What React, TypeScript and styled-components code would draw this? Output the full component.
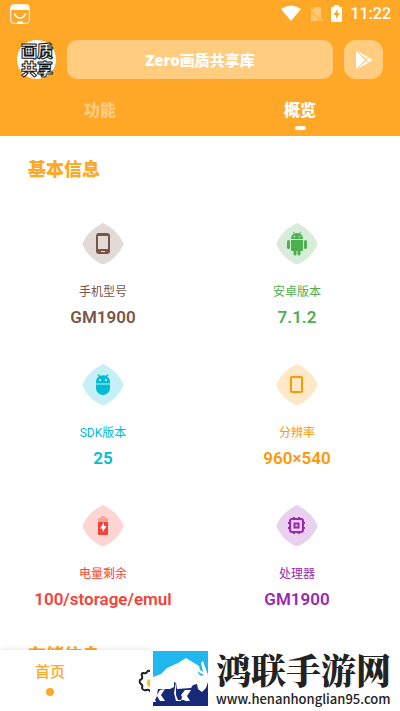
import React from "react";
import styled, { createGlobalStyle } from "styled-components";

const Global = createGlobalStyle`
  *, *::before, *::after { box-sizing: border-box; }
  body { margin: 0; background: #fff; font-family: Roboto, "Noto Sans CJK SC", sans-serif; }
  h1, h2, p, dl, dt, dd { margin: 0; }
  button { border: 0; padding: 0; background: none; font: inherit; color: inherit; }
`;

const Page = styled.div`
  position: relative;
  display: flex;
  flex-direction: column;
  height: 100vh;
  overflow: hidden;
  background: #fff;
`;

const Header = styled.header`
  flex: none;
  background: #ffa726;
  color: #fff;
`;

const StatusBar = styled.div`
  display: flex;
  align-items: center;
  height: 27px;
  padding: 0 9px 0 10px;
`;

const StatusIcons = styled.div`
  display: flex;
  align-items: center;
  gap: 8px;
  margin-left: auto;
`;

const Clock = styled.time`
  font-size: 16px;
  line-height: 20px;
  font-weight: 500;
`;

const TopRow = styled.div`
  display: flex;
  align-items: center;
  gap: 11px;
  padding: 13px 17px 0;
`;

const Avatar = styled.div`
  flex: none;
  display: flex;
  width: 39px;
  height: 39px;
  border-radius: 50%;
  background: #fff;
`;

const TitleButton = styled.button`
  flex: 1;
  height: 39px;
  border-radius: 10px;
  background: #ffcc80;
  font-size: 15px;
  font-weight: 900;
  font-family: "Noto Sans", "Noto Sans CJK SC", sans-serif;
`;

const StoreButton = styled.button`
  flex: none;
  display: flex;
  align-items: center;
  justify-content: center;
  width: 39px;
  height: 39px;
  border-radius: 12px;
  background: #ffcc80;
`;

const Tabs = styled.div`
  display: grid;
  grid-template-columns: 1fr 1fr;
  height: 57px;
`;

const Tab = styled.button<{ $active?: boolean }>`
  display: flex;
  flex-direction: column;
  align-items: center;
  gap: 3px;
  padding-top: 20px;
  color: ${(p) => (p.$active ? "#fff" : "#ffcc80")};
  font-size: 16px;
  line-height: 24px;
  font-weight: 900;
  &::after {
    content: "";
    width: 11px;
    height: 4px;
    border-radius: 2px;
    background: ${(p) => (p.$active ? "#fff" : "transparent")};
  }
`;

const Content = styled.main`
  flex: 1;
  min-height: 0;
  overflow: hidden;
`;

const SectionTitle = styled.h2`
  padding: 20px 28px 0;
  color: #ffa726;
  font-size: 18px;
  line-height: 28px;
  font-weight: 900;
`;

const InfoGrid = styled.dl`
  display: grid;
  grid-template-columns: 1fr 1fr;
  row-gap: 35px;
  padding: 39px 6px 11px;
`;

const InfoCard = styled.div<{ $color: string }>`
  display: flex;
  flex-direction: column;
  align-items: center;
  color: ${(p) => p.$color};
`;

const InfoLabel = styled.dt`
  margin-top: 18px;
  font-size: 12px;
  line-height: 18px;
`;

const InfoValue = styled.dd`
  margin-top: 4px;
  font-size: 17px;
  line-height: 24px;
  font-weight: 600;
`;

const BottomNav = styled.nav`
  flex: none;
  display: grid;
  grid-template-columns: 1fr 1fr 1fr 1fr;
  height: 61px;
  background: #fff;
  box-shadow: 0 0 6px rgba(0, 0, 0, 0.12);
  z-index: 1;
`;

const NavButton = styled.button`
  display: flex;
  flex-direction: column;
  align-items: center;
  justify-content: center;
  gap: 6px;
  color: #ffa726;
  font-size: 15px;
  line-height: 18px;
  font-weight: 500;
  &[aria-current] {
    justify-content: flex-start;
    gap: 7px;
    padding-top: 13px;
  }
  &[aria-current]::after {
    content: "";
    width: 8px;
    height: 8px;
    border-radius: 50%;
    background: currentColor;
  }
`;

const Watermark = styled.a`
  position: absolute;
  right: 0;
  bottom: 0;
  z-index: 2;
  display: flex;
  width: 250px;
  height: 65px;
  padding: 5px 0 0 3px;
  gap: 8px;
  background: #fff;
  color: #222;
  text-decoration: none;
`;

const Logo = styled.svg`
  flex: none;
  width: 55px;
  height: 55px;
`;

const WatermarkText = styled.div`
  display: flex;
  flex-direction: column;
  gap: 4px;
  white-space: nowrap;
`;

const WatermarkName = styled.strong`
  font-family: "Noto Serif CJK SC", "Noto Sans CJK SC", serif;
  font-size: 35px;
  line-height: 36px;
  font-weight: 900;
`;

const WatermarkUrl = styled.span`
  font-family: "Noto Sans CJK SC", sans-serif;
  font-size: 13px;
  line-height: 16px;
  font-weight: 500;
`;

const AvatarText = styled.text`
  font-family: "Noto Sans CJK SC", sans-serif;
  font-size: 16px;
  font-weight: 900;
  fill: #fff;
  stroke: #111;
  stroke-width: 1px;
  stroke-linejoin: round;
`;

function Badge({ color, children }: { color: string; children: React.ReactNode }) {
  return (
    <svg width="42" height="42" viewBox="0 0 42 42" aria-hidden="true" fill={color}>
      <path
        d="M21 0C22 .3 23 1 25 2.200C32 6 37.500 12 40.500 18.500Q42.500 21 40.500 23.500C37.500 30 32 36 25 39.800Q21 42.500 17 39.800C10 36 4.500 30 1.500 23.500Q-.5 21 1.500 18.500C4.500 12 10 6 17 2.200C19 1 20 .3 21 0Z"
        opacity=".22"
      />
      {children}
    </svg>
  );
}

const phone = (
  <path fillRule="evenodd" d="M17 10h8a3 3 0 0 1 3 3v15a3 3 0 0 1-3 3h-8a3 3 0 0 1-3-3V13a3 3 0 0 1 3-3Zm-1 3v13h10V13Zm3 15v1h4v-1Z" />
);

const android = (
  <g>
    <path d="M15 16c0-3 1.500-4.500 3-5.300l-1.200-1.600.6-.5 1.400 1.800a8 8 0 0 1 4.400 0l1.400-1.800.6.5-1.200 1.600c1.500.8 3 2.300 3 5.300Z" />
    <path d="M15 17h12v10a1 1 0 0 1-1 1h-1.500v3a1.500 1.500 0 0 1-3 0v-3h-1v3a1.500 1.500 0 0 1-3 0v-3H16a1 1 0 0 1-1-1Z" />
    <rect x="11" y="17" width="3" height="9" rx="1.500" />
    <rect x="28" y="17" width="3" height="9" rx="1.500" />
    <circle cx="18.500" cy="13.500" r=".7" fill="#fff" />
    <circle cx="23.500" cy="13.500" r=".7" fill="#fff" />
  </g>
);

const adb = (
  <g>
    <path d="M14 19v-1c0-3 1.500-4.800 3-5.800L15.300 11l.9-.8 2 1.600a8 8 0 0 1 5.600 0l2-1.600.9.800-1.700 1.200c1.500 1 3 2.800 3 5.800v1Z" />
    <path d="M14 21h14v3a7 7 0 0 1-14 0Z" />
    <path d="M14 19h14v2H14Z" opacity=".5" />
    <circle cx="18" cy="16" r="1" fill="#fff" />
    <circle cx="24" cy="16" r="1" fill="#fff" />
  </g>
);

const screen = (color: string) => (
  <rect x="15" y="13" width="11" height="15" rx="1" fill="none" stroke={color} strokeWidth="2" />
);

const battery = (
  <g>
    <path d="M16 17v-3q0-1 1-1h2v-2h4v2h2q1 0 1 1v3Z" opacity=".35" />
    <path d="M16 17h10v12q0 1-1 1h-8q-1 0-1-1Z" />
    <path d="m22 17-4 6.500h2.500v4l4-6.500H22Z" fill="#fff" />
  </g>
);

const chip = (color: string) => (
  <g fill="none" stroke={color} strokeWidth="2">
    <rect x="14" y="14" width="13" height="13" rx="2" />
    <rect x="18.500" y="18.500" width="4" height="4" />
    <path d="M18 12v2m5-2v2m-5 13v2m5-2v2M12 18h2m-2 5h2m13-5h2m-2 5h2" />
  </g>
);

const items = [
  { label: "手机型号", value: "GM1900", color: "#795548", icon: phone },
  { label: "安卓版本", value: "7.1.2", color: "#4caf50", icon: android },
  { label: "SDK版本", value: "25", color: "#00bcd4", icon: adb },
  { label: "分辨率", value: "960×540", color: "#ff9800", icon: screen("#ff9800") },
  { label: "电量剩余", value: "100/storage/emul", color: "#f44336", icon: battery },
  { label: "处理器", value: "GM1900", color: "#9c27b0", icon: chip("#9c27b0") },
];

function BisonLogo() {
  return (
    <Logo viewBox="0 0 55 55" aria-hidden="true">
      <path d="M0 0h55v55H0Z" fill="#20b7ee" />
      <path d="M0 26 8 23 14 17 25 12 33 7 41 12 46 15 47 19 50 21 49 16 48 12 50 10 52 16 55 24V55H0Z" fill="#fff" />
      <path d="M45 20q3 4 6 3l-2 2q-4-1-4-5Z" fill="#20b7ee" />
      <path d="M0 55V49L4 44 5 38H17L21 36 21 31 23 32 24 38 38 37 40 34 44 33 45 38 49 41 53 37 55 31V55Z" fill="#172a78" />
      <path d="m7 39 5-1-4 6 4 6H7l-3-5-2 4 1 2H0v-4l4-3ZM23 31v13l2 5h6l-3-5 4-5h6l-4 6 3 5h-5l-3-4-1 4h-5l-2-8Z" fill="#fff" />
    </Logo>
  );
}

export default function App() {
  return (
    <Page>
      <Global />
      <Header>
        <StatusBar>
          <svg width="20" height="20" viewBox="0 0 20 20" aria-hidden="true">
            <rect x=".7" y=".7" width="18.600" height="18.600" rx="3" fill="none" stroke="#fff" />
            <path d="M1 6V3q0-2 3-2h12q3 0 3 2v3Z" fill="#fff" />
            <path d="M4.500 9.500c2 6 9 6 11 0" fill="none" stroke="#fff" strokeWidth="1.500" />
            <path d="M7 18.500h6" stroke="#fff" strokeWidth="2" />
          </svg>
          <StatusIcons>
            <svg width="20" height="17" viewBox="0 0 20 17" aria-hidden="true">
              <path d="M0 4q10-7 20 0L10 16Z" fill="#fff" />
            </svg>
            <svg width="14" height="16" viewBox="0 0 14 16" aria-hidden="true">
              <path d="M6 1h6v14H2V5Z" fill="#ffc774" />
              <path d="m0 3 13 13" stroke="#ffa726" strokeWidth="1" />
              <path d="m0 1 14 14" stroke="#ffc774" />
            </svg>
            <svg width="11" height="17" viewBox="0 0 11 17" aria-hidden="true">
              <path d="M0 3q0-1 1-1h2V0h5v2h2q1 0 1 1v13q0 1-1 1H1q-1 0-1-1Z" fill="#fff" />
              <path d="M6.500 4 2.500 10H5v4l4-6H6.500Z" fill="#ffa726" />
            </svg>
            <Clock>11:22</Clock>
          </StatusIcons>
        </StatusBar>
        <TopRow>
          <Avatar>
            <svg width="39" height="39" viewBox="0 0 39 39" role="img" aria-label="画质共享">
              <AvatarText x="4" y="17">画质</AvatarText>
              <AvatarText x="4" y="35">共享</AvatarText>
            </svg>
          </Avatar>
          <TitleButton>Zero画质共享库</TitleButton>
          <StoreButton aria-label="应用商店">
            <svg width="18" height="20" viewBox="0 0 18 20" aria-hidden="true">
              <path d="M1 1v18l9-9Z" fill="#fff" />
              <path d="m2 1 9 8 2-2ZM2 19l9-8 2 2ZM14 7.500 11.500 10l2.500 2.500 3.500-2.500Z" fill="#fff" />
            </svg>
          </StoreButton>
        </TopRow>
        <Tabs role="tablist">
          <Tab role="tab" aria-selected={false}>功能</Tab>
          <Tab role="tab" aria-selected $active>概览</Tab>
        </Tabs>
      </Header>
      <Content>
        <SectionTitle>基本信息</SectionTitle>
        <InfoGrid>
          {items.map((item) => (
            <InfoCard key={item.label} $color={item.color}>
              <Badge color={item.color}>{item.icon}</Badge>
              <InfoLabel>{item.label}</InfoLabel>
              <InfoValue>{item.value}</InfoValue>
            </InfoCard>
          ))}
        </InfoGrid>
        <SectionTitle>存储信息</SectionTitle>
      </Content>
      <BottomNav>
        <NavButton aria-current="page">首页</NavButton>
        <NavButton aria-label="设置">
          <svg width="24" height="24" viewBox="0 0 24 24" aria-hidden="true">
            <path
              d="M12 2q2 3 4 2t4 1q-1 3 1 4t1 3q-2 1-1 4t-1 4q-3-1-4 1t-4 1q-1-2-4-1t-4-2q1-3-1-4t-1-4q3-1 2-4t1-3q3 1 4-1t3-1Z"
              fill="none"
              stroke="#222"
              strokeWidth="2"
            />
            <circle cx="13" cy="14" r="4" fill="#ffc107" />
          </svg>
        </NavButton>
      </BottomNav>
      <Watermark href="#">
        <BisonLogo />
        <WatermarkText>
          <WatermarkName>鸿联手游网</WatermarkName>
          <WatermarkUrl>www.henanhonglian95.com</WatermarkUrl>
        </WatermarkText>
      </Watermark>
    </Page>
  );
}
